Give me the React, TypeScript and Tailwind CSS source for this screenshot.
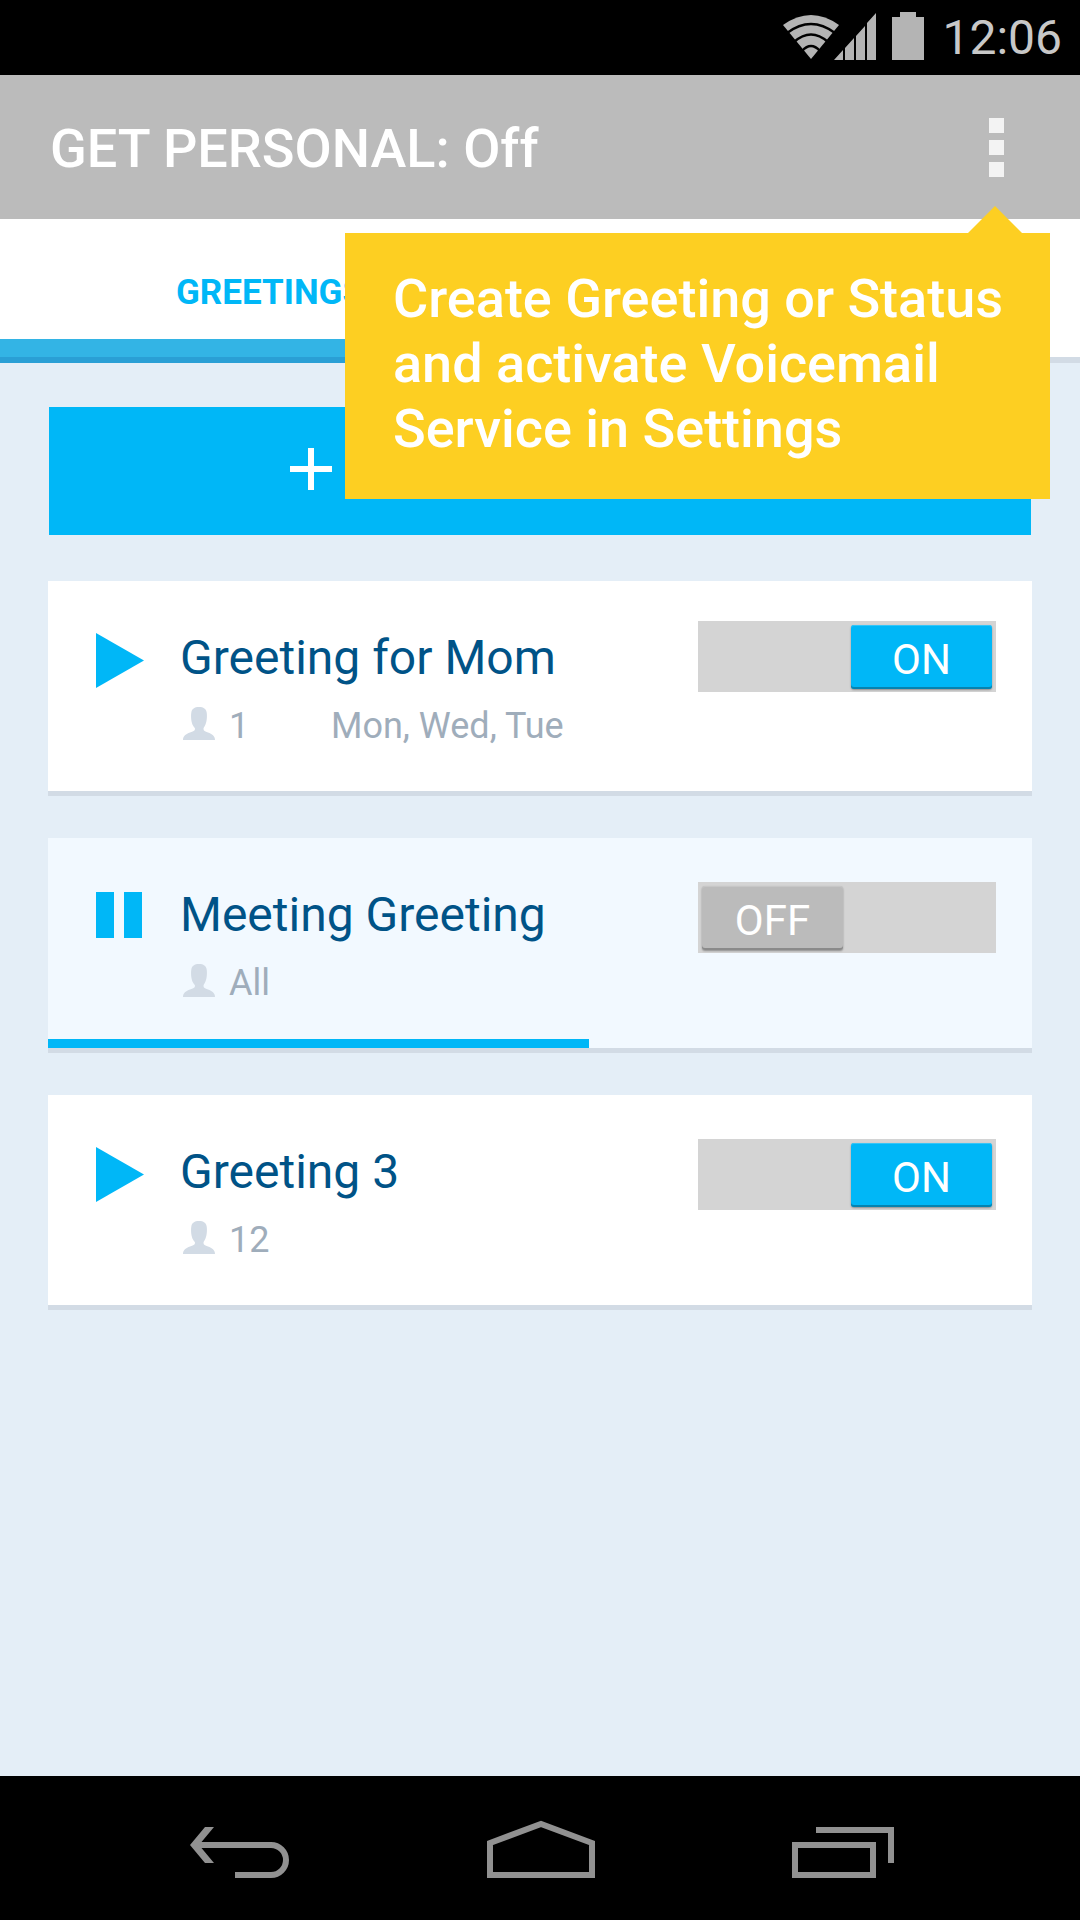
import { useState } from "react";

type Greeting = {
  id: number;
  title: string;
  people: string;
  days?: string;
  enabled: boolean;
};

const initialGreetings: Greeting[] = [
  { id: 1, title: "Greeting for Mom", people: "1", days: "Mon, Wed, Tue", enabled: true },
  { id: 2, title: "Meeting Greeting", people: "All", enabled: false },
  { id: 3, title: "Greeting 3", people: "12", enabled: true },
];

function SignalIcons() {
  return (
    <svg width="93" height="48" viewBox="0 0 93 48" aria-hidden="true">
      <path d="M28 47L0 13Q28 -7 56 13Z" fill="#b4b4b4" />
      <g fill="none" stroke="#000" strokeWidth="2.4">
        <path d="M4 21Q28 3 52 21" />
        <path d="M11 30Q28 15 45 30" />
        <path d="M19 39Q28 29 37 39" />
      </g>
      <path d="M51 48L60 38V48ZM62 36L71 26V48H62ZM73 24L82 14V48H73ZM84 11L93 1V48H84Z" fill="#b4b4b4" />
    </svg>
  );
}

function BatteryIcon() {
  return (
    <svg width="32" height="48" viewBox="0 0 32 48" fill="#b4b4b4" aria-hidden="true">
      <path d="M8 0H24V5H32V48H0V5H8Z" />
    </svg>
  );
}

function PersonIcon() {
  return (
    <svg width="32" height="33" viewBox="0 0 32 33" fill="#d2dbe5" aria-hidden="true" className="mt-0.5">
      <path d="M16 0C20.500 0 23 2 23.600 5C24.500 10 23.500 16 22 18.500C21 20.500 20.500 20.500 20.500 22C20.500 24 22 24.300 25 25.600C29 27 32 29 32 33H0C0 29 3 27 7 25.600C10 24.300 12 24 12 22C12 20.500 11 20.500 10 18.500C8.500 16 7.500 10 8.400 5C9 2 11.500 0 16 0Z" />
    </svg>
  );
}

function Switch({ on, label, onToggle }: { on: boolean; label: string; onToggle: () => void }) {
  return (
    <button
      type="button"
      role="switch"
      aria-checked={on}
      aria-label={label}
      onClick={onToggle}
      className={`flex h-[71px] w-[298px] items-center bg-[#d4d4d4] px-1 ${on ? "justify-end" : "justify-start"}`}
    >
      <span
        className={`flex h-16 w-[141px] items-center justify-center rounded-[3px] pt-1.5 text-[42px] leading-[56px] text-white ${
          on
            ? "bg-[#00b7f7] shadow-[inset_0_1px_0_#35c5f8,inset_0_-2px_0_#0583b0,0_1px_2px_#00000055]"
            : "bg-[#bbbbbb] shadow-[inset_0_1px_0_#c6c6c6,inset_0_-2px_0_#8a8a8a,0_1px_2px_#00000055]"
        }`}
      >
        {on ? "ON" : "OFF"}
      </span>
    </button>
  );
}

function GreetingCard({
  greeting,
  playing,
  progress,
  onPlay,
  onToggle,
}: {
  greeting: Greeting;
  playing: boolean;
  progress: number;
  onPlay: () => void;
  onToggle: () => void;
}) {
  return (
    <li className={`flex flex-col border-b-[5px] border-[#d2dbe5] ${playing ? "bg-[#f2f9ff]" : "bg-white"}`}>
      <div className="flex min-h-[201px] pr-9 pl-12">
        <button
          type="button"
          onClick={onPlay}
          aria-label={`${playing ? "Pause" : "Play"} ${greeting.title}`}
          className={`flex w-12 shrink-0 items-center ${playing ? "h-[154px]" : "h-[158px]"}`}
        >
          {playing ? (
            <svg width="46" height="46" viewBox="0 0 46 46" fill="#00b7f7" aria-hidden="true">
              <path d="M0 0H18V46H0ZM28 0H46V46H28Z" />
            </svg>
          ) : (
            <svg width="48" height="55" viewBox="0 0 48 55" fill="#00b7f7" aria-hidden="true">
              <path d="M0 0L48 27.500L0 55Z" />
            </svg>
          )}
        </button>
        <div className="flex min-w-0 flex-1 flex-col pt-[45px] pl-9">
          <h2 className="text-[48px] leading-[64px] whitespace-nowrap text-[#005387]">{greeting.title}</h2>
          <div className="mt-[15px] flex text-[36px] leading-[42px] text-[#9fadbb]">
            <div className="flex w-[151px] gap-[14px] pl-[3px]">
              <PersonIcon />
              <span>{greeting.people}</span>
            </div>
            {greeting.days && <span>{greeting.days}</span>}
          </div>
        </div>
        <div className={greeting.days ? "pt-10" : "pt-11"}>
          <Switch on={greeting.enabled} label={`${greeting.title} active`} onToggle={onToggle} />
        </div>
      </div>
      <div className="h-[9px]">
        {playing && <div className="h-full bg-[#00b7f7]" style={{ width: `${progress}%` }} />}
      </div>
    </li>
  );
}

export default function App() {
  const [greetings, setGreetings] = useState(initialGreetings);
  const [playingId, setPlayingId] = useState<number | null>(2);

  const toggle = (id: number) =>
    setGreetings((list) => list.map((g) => (g.id === id ? { ...g, enabled: !g.enabled } : g)));

  return (
    <div className="flex min-h-screen flex-col bg-[#e4eef7] font-['Roboto',sans-serif]">
      <div className="flex h-[75px] items-center justify-end bg-black pr-[18px] pb-[3px]">
        <SignalIcons />
        <div className="ml-4 flex items-center gap-[18px]">
          <BatteryIcon />
          <span className="pt-1 text-[48px] leading-[56px] text-[#c8c8c8]">12:06</span>
        </div>
      </div>

      <header className="relative flex h-36 items-center justify-between bg-[#bbbbbb] pr-[60px] pl-[50px]">
        <h1 className="pt-1 text-[54px] leading-[64px] font-medium text-white">GET PERSONAL: Off</h1>
        <button type="button" aria-label="More options" className="flex w-12 flex-col items-center gap-[7px]">
          <span className="size-[15px] bg-[#f3f3f3]" />
          <span className="size-[15px] bg-[#f3f3f3]" />
          <span className="size-[15px] bg-[#f3f3f3]" />
        </button>
        <div
          role="tooltip"
          className="absolute top-[158px] right-[30px] z-10 w-[705px] bg-[#fdcf22] pt-[33px] pr-8 pb-[38px] pl-12 text-[54px] leading-[65px] font-medium text-white"
        >
          <svg width="54" height="27" viewBox="0 0 54 27" fill="#fdcf22" aria-hidden="true" className="absolute right-7 bottom-full">
            <path d="M0 27L27 0L54 27Z" />
          </svg>
          Create Greeting or Status and activate Voicemail Service in Settings
        </div>
      </header>

      <div role="tablist" className="grid grid-cols-2 bg-white">
        <button
          type="button"
          role="tab"
          aria-selected="true"
          className="h-36 pt-1 text-[35px] leading-[42px] font-bold text-[#00b7f7] shadow-[inset_0_-6px_0_#2a9fd5,inset_0_-24px_0_#33b4e5]"
        >
          GREETINGS
        </button>
        <button type="button" role="tab" aria-selected="false" aria-label="Status" className="h-36 shadow-[inset_0_-6px_0_#d2dbe5]" />
      </div>

      <main className="flex flex-1 flex-col px-12 pt-11">
        <button type="button" aria-label="Create greeting" className="mx-px flex h-32 items-center bg-[#00b7f7] pb-1 pl-[241px]">
          <svg width="42" height="42" viewBox="0 0 42 42" fill="#fff" aria-hidden="true">
            <path d="M18 0H24V18H42V24H24V42H18V24H0V18H18Z" />
          </svg>
        </button>
        <ul className="mt-[46px] flex flex-col gap-[42px]">
          {greetings.map((g) => (
            <GreetingCard
              key={g.id}
              greeting={g}
              playing={playingId === g.id}
              progress={55}
              onPlay={() => setPlayingId(playingId === g.id ? null : g.id)}
              onToggle={() => toggle(g.id)}
            />
          ))}
        </ul>
      </main>

      <nav aria-label="System" className="flex h-36 items-end justify-between bg-black pr-[17.2%] pb-[42px] pl-[17.6%]">
        <button type="button" aria-label="Back">
          <svg width="99" height="51" viewBox="0 0 99 51" aria-hidden="true">
            <path d="M8 18H81A15 15 0 0 1 81 48H45" fill="none" stroke="#919191" strokeWidth="6" />
            <path d="M0 18L15 0H24L9 18L24 36H15Z" fill="#919191" />
          </svg>
        </button>
        <button type="button" aria-label="Home">
          <svg width="108" height="58" viewBox="0 0 108 58" aria-hidden="true">
            <path d="M3 23L54 4L105 23V55H3Z" fill="none" stroke="#919191" strokeWidth="6" />
          </svg>
        </button>
        <button type="button" aria-label="Recent apps">
          <svg width="102" height="51" viewBox="0 0 102 51" fill="none" stroke="#919191" strokeWidth="6" aria-hidden="true">
            <path d="M3 18H81V48H3ZM24 3H99V36" />
          </svg>
        </button>
      </nav>
    </div>
  );
}
